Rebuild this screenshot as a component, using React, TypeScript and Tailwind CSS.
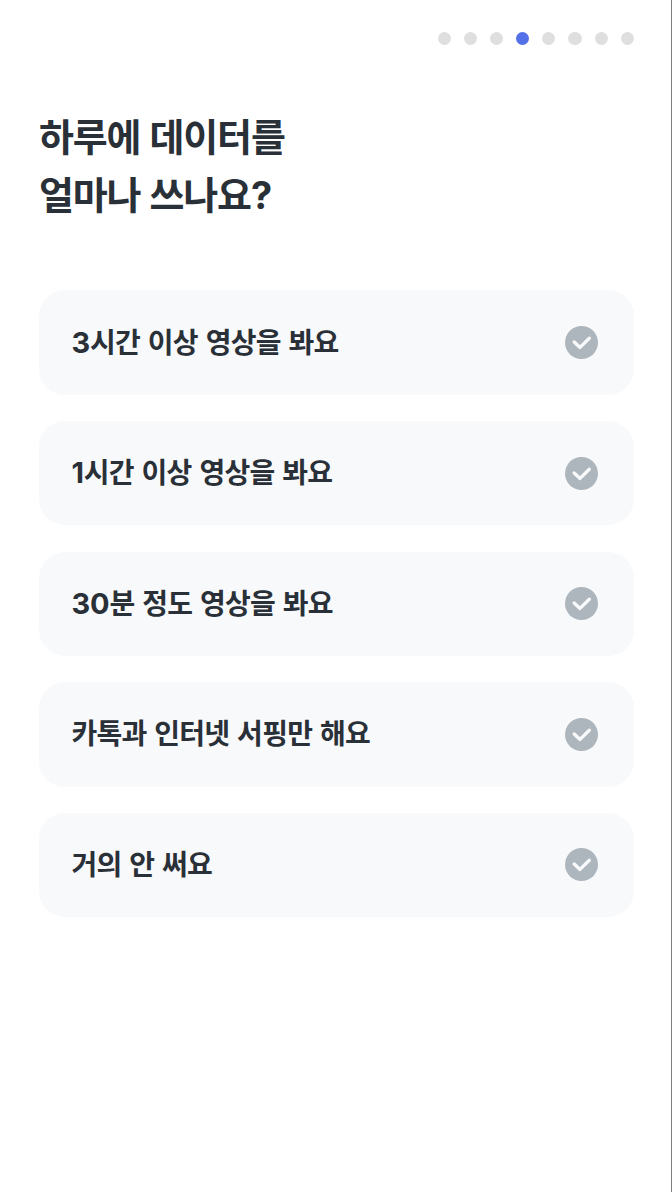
type Option = {
    id: string;
    amount?: string;
    label: string;
}

const TOTAL_STEPS = 8;
const CURRENT_STEP = 3;

const options: Option[] = [
    { id: "3h", amount: "3", label: "시간 이상 영상을 봐요" },
    { id: "1h", amount: "1", label: "시간 이상 영상을 봐요" },
    { id: "30m", amount: "30", label: "분 정도 영상을 봐요" },
    { id: "chat", label: "카톡과 인터넷 서핑만 해요" },
    { id: "none", label: "거의 안 써요" },
];

const StepDots = () => {
    return (
        <div className="flex justify-end gap-[13px] pr-[0.3px]">
            {Array.from({ length: TOTAL_STEPS }, (_, i) => (
                <span
                    key={i}
                    className={i === CURRENT_STEP
                        ? "size-[13.1px] rounded-full bg-[#5470e8]"
                        : "size-[13.1px] rounded-full bg-[#dfdfdf]"}
                />
            ))}
        </div>
    );
}

const CheckIcon = () => {
    return (
        <svg className="size-[33px]" viewBox="0 0 33 33" fill="none">
            <circle cx="16.5" cy="16.5" r="16.5" fill="#adb5bd" />
            <path
                d="M9.2 16L15 21.4L24.3 12.3"
                stroke="#f8f9fb"
                strokeWidth="3.4"
                strokeLinecap="round"
                strokeLinejoin="round"
            />
        </svg>
    );
}

const OptionButton = ({ amount, label }: { amount?: string; label: string }) => {
    return (
        <button className="flex h-[104.4px] w-full items-center justify-between rounded-[26px] bg-[#f8f9fb] pr-9 pl-[32.5px]">
            <span className="text-[28px] leading-10 font-bold tracking-[-0.75px] [word-spacing:1.9px]">
                {amount && <span className="text-[29px] leading-none tracking-[-0.2px]">{amount}</span>}
                {label}
            </span>
            <CheckIcon />
        </button>
    );
}

const App = () => {
    return (
        <main className="min-h-[1192px] border-r border-[#7f7f7f] bg-white pt-8 pr-[37px] pl-[39px] font-['Inter','Noto_Sans_CJK_KR',sans-serif] text-[#2a3037]">
            <StepDots />
            <h1 className="mt-[63px] text-[38px] leading-[58px] font-bold tracking-[-1.15px] [word-spacing:1.2px]">
                하루에 데이터를<br />얼마나 쓰나요?
            </h1>
            <div className="mt-[66.4px] flex flex-col gap-[26.2px]">
                {options.map((o) => (
                    <OptionButton key={o.id} amount={o.amount} label={o.label} />
                ))}
            </div>
        </main>
    );
}
export default App;
